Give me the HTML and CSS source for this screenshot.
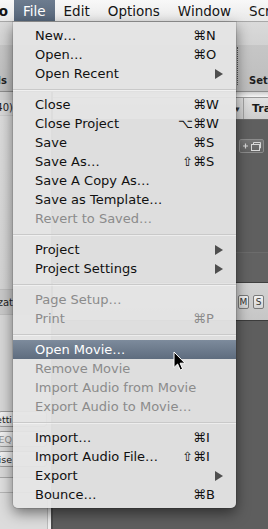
FILE: index.html
```html
<!DOCTYPE html>
<html>
<head>
<meta charset="utf-8">
<link rel="stylesheet" href="styles.css">
</head>
<body>
<div class="screen">
  <div class="menubar">
    <span class="mb-app"><span>Logic Pro</span></span>
    <span class="mb-item active">File</span>
    <span class="mb-item">Edit</span>
    <span class="mb-item">Options</span>
    <span class="mb-item">Window</span>
    <span class="mb-item">Screenset</span>
  </div>

  <div class="toolbar">
    <div class="tb-left"><span>Tools</span></div>
    <div class="tb-right"><span class="tb-dots"></span><span class="tb-label">Set Locators</span></div>
  </div>

  <div class="workspace">
    <div class="inspector">
      <div class="in-gap"></div>
      <div class="in-row"><span class="clip">(140)</span></div>
      <div class="in-plain"></div>
      <div class="in-band"><span class="clip">Visualizzat</span></div>
      <div class="in-plain2"></div>
      <div class="in-btn"><span class="clip">Setti</span></div>
      <div class="in-btn dim"><span class="clip">EQ</span></div>
      <div class="in-btn"><span class="clip">Noise</span></div>
      <div class="in-line"></div>
      <div class="in-box"></div>
      <div class="in-bottom"><span class="in-edge"></span></div>
    </div>

    <div class="arrange">
      <div class="ar-top"></div>
      <div class="ar-head"><span class="hd-tri">▾</span><span class="hd-div"></span><span class="hd-txt">Track</span></div>
      <div class="ar-dark">
        <div class="add-btn">
          <svg width="20" height="10" viewBox="0 0 20 10"><path d="M1 5h5M3.5 2.5v5" stroke="#d8d8d8" stroke-width="1.2" fill="none"/><rect x="9.5" y="3.5" width="8" height="6" fill="none" stroke="#d8d8d8"/><path d="M11.5 3.5V1.5h7v5.5h-1" fill="none" stroke="#d8d8d8"/></svg>
        </div>
      </div>
      <div class="ar-nums"><span>140</span><span>100</span></div>
      <div class="ar-strip"><span class="ms">M</span><span class="ms">S</span></div>
      <div class="ar-rest"></div>
    </div>
  </div>

  <div class="menu">
    <div class="mi"><span class="lb">New…</span><span class="md">⌘</span><span class="ky">N</span></div>
    <div class="mi"><span class="lb">Open…</span><span class="md">⌘</span><span class="ky">O</span></div>
    <div class="mi"><span class="lb">Open Recent</span><span class="md"></span><span class="sub"></span></div>
    <div class="sep"></div>
    <div class="mi"><span class="lb">Close</span><span class="md">⌘</span><span class="ky">W</span></div>
    <div class="mi"><span class="lb">Close Project</span><span class="md">⌥⌘</span><span class="ky">W</span></div>
    <div class="mi"><span class="lb">Save</span><span class="md">⌘</span><span class="ky">S</span></div>
    <div class="mi"><span class="lb">Save As…</span><span class="md">⇧⌘</span><span class="ky">S</span></div>
    <div class="mi"><span class="lb">Save A Copy As…</span></div>
    <div class="mi"><span class="lb">Save as Template…</span></div>
    <div class="mi off"><span class="lb">Revert to Saved…</span></div>
    <div class="sep"></div>
    <div class="mi"><span class="lb">Project</span><span class="md"></span><span class="sub"></span></div>
    <div class="mi"><span class="lb">Project Settings</span><span class="md"></span><span class="sub"></span></div>
    <div class="sep"></div>
    <div class="mi off"><span class="lb">Page Setup…</span></div>
    <div class="mi off"><span class="lb">Print</span><span class="md">⌘</span><span class="ky">P</span></div>
    <div class="sep"></div>
    <div class="mi hl"><span class="lb">Open Movie…</span></div>
    <div class="mi off"><span class="lb">Remove Movie</span></div>
    <div class="mi off"><span class="lb">Import Audio from Movie</span></div>
    <div class="mi off"><span class="lb">Export Audio to Movie…</span></div>
    <div class="sep"></div>
    <div class="mi"><span class="lb">Import…</span><span class="md">⌘</span><span class="ky">I</span></div>
    <div class="mi"><span class="lb">Import Audio File…</span><span class="md">⇧⌘</span><span class="ky">I</span></div>
    <div class="mi"><span class="lb">Export</span><span class="md"></span><span class="sub"></span></div>
    <div class="mi"><span class="lb">Bounce…</span><span class="md">⌘</span><span class="ky">B</span></div>
  </div>

  <svg class="cursor" width="14" height="21" viewBox="0 0 14 21">
    <path d="M1 1 L1 16.5 L4.6 13 L7.2 19 L9.6 18 L7.1 12.2 L12 12.2 Z" fill="#000" stroke="#fff" stroke-width="1" stroke-linejoin="round"/>
  </svg>
</div>
</body>
</html>
```

FILE: styles.css
```css
* { box-sizing: border-box; }
html, body { margin: 0; padding: 0; }
body {
  width: 268px;
  height: 529px;
  overflow: hidden;
  font-family: "DejaVu Sans", "Liberation Sans", sans-serif;
  background: #5c5c5c;
}
.screen {
  position: relative;
  width: 268px;
  height: 529px;
  overflow: hidden;
  display: flex;
  flex-direction: column;
}

/* menu bar */
.menubar {
  height: 22px;
  flex: none;
  display: flex;
  align-items: stretch;
  background: linear-gradient(#f8f8f8, #e9e9e9);
  border-bottom: 1px solid #a8a8a8;
  font-size: 13.5px;
  color: #151515;
  white-space: nowrap;
}
.mb-app {
  width: 14px;
  flex: none;
  display: flex;
  justify-content: flex-end;
  align-items: center;
  overflow: hidden;
  padding-right: 6px;
  font-weight: bold;
}
.mb-app span { flex: none; }
.mb-item {
  display: flex;
  align-items: center;
  padding: 0 9px;
  flex: none;
}
.mb-item.active {
  background: linear-gradient(#6d7c8f, #56667a);
  color: #fff;
}

/* toolbar */
.toolbar {
  height: 70px;
  flex: none;
  display: flex;
  justify-content: space-between;
  align-items: flex-end;
  background: linear-gradient(#dadada 0, #d2d2d2 33%, #c6c6c6 34%, #bdbdbd 100%);
  border-bottom: 1px solid #8c8c8c;
  font-size: 10px;
  font-weight: bold;
  color: #1e1e1e;
  padding-bottom: 5px;
}
.tb-left {
  width: 13px;
  display: flex;
  justify-content: flex-end;
  overflow: hidden;
  white-space: nowrap;
  padding-right: 6px;
}
.tb-left span { flex: none; }
.tb-right {
  width: 31px;
  display: flex;
  align-items: flex-end;
  white-space: nowrap;
  overflow: hidden;
}
.tb-dots {
  flex: none;
  width: 1px;
  height: 38px;
  border-left: 1px dotted #555;
  margin-bottom: 1px;
}
.tb-label { padding-left: 11px; flex: none; }

/* workspace */
.workspace {
  flex: 1;
  display: flex;
  min-height: 0;
}
.inspector {
  width: 53px;
  flex: none;
  display: flex;
  flex-direction: column;
  background: #d7d7d7;
  border-right: 2px solid #4a4a4a;
  font-size: 10px;
  color: #222;
}
.clip {
  width: 13px;
  display: flex;
  justify-content: flex-end;
  overflow: hidden;
  white-space: nowrap;
  flex: none;
}
.in-gap { height: 8px; background: #d0d0d0; }
.in-row { height: 16px; display: flex; align-items: center; border-bottom: 1px solid #cacaca; }
.in-plain { height: 173px; background: linear-gradient(#dadada, #d3d3d3); }
.in-band {
  height: 26px;
  display: flex;
  align-items: center;
  background: #c8c8c8;
  border-top: 1px solid #bdbdbd;
  border-bottom: 1px solid #bdbdbd;
}
.in-plain2 { height: 96px; background: #d6d6d6; }
.in-btn {
  height: 16px;
  margin: 0 4px 4px -2px;
  display: flex;
  align-items: center;
  border: 1px solid #9a9a9a;
  border-radius: 3px;
  background: linear-gradient(#f2f2f2, #dcdcdc);
  font-size: 9.5px;
  padding-left: 1px;
}
.in-btn .clip { width: 12px; }
.in-btn.dim { color: #8e8e8e; }
.in-line { height: 7px; border-bottom: 1px solid #a6a6a6; }
.in-box { height: 15px; border-bottom: 1px solid #b4b4b4; background: #dedede; }
.in-bottom {
  flex: 1;
  background: #dcdcdc;
  display: flex;
  justify-content: flex-end;
}
.in-edge { width: 4px; background: #efefef; border-left: 1px solid #bcbcbc; }

/* arrange */
.arrange {
  flex: 1;
  display: flex;
  flex-direction: column;
  background: #5d5d5d;
  padding-left: 181px;
  font-size: 10px;
}
.arrange > div { margin-left: -181px; padding-left: 181px; }
.ar-top { height: 6px; background: linear-gradient(#cfcfcf, #f6f6f6); border-bottom: 1px solid #9a9a9a; }
.ar-head {
  height: 22px;
  display: flex;
  align-items: center;
  background: linear-gradient(#e2e2e2, #cdcdcd);
  border-bottom: 1px solid #6a6a6a;
  color: #1a1a1a;
  font-weight: bold;
  font-size: 11px;
  white-space: nowrap;
  overflow: hidden;
}
.hd-tri { width: 9px; font-size: 9px; padding-left: 1px; flex: none; color: #333; }
.hd-div { width: 1px; height: 22px; background: #a2a2a2; margin-right: 8px; flex: none; }
.hd-txt { flex: none; }
.ar-dark {
  height: 133px;
  background: #5f5f5f;
  border-bottom: 1px solid #6c6c6c;
  padding-top: 19px;
}
.add-btn {
  margin-left: 5px;
  width: 25px;
  height: 14px;
  border: 1px solid #8c8c8c;
  border-radius: 2px;
  background: linear-gradient(#767676, #626262);
  display: flex;
  align-items: center;
  justify-content: center;
}
.ar-nums {
  height: 30px;
  display: flex;
  flex-direction: column;
  justify-content: center;
  align-items: flex-end;
  color: #e2e2e2;
  font-weight: bold;
  font-size: 10.5px;
  line-height: 13px;
  background: #626262;
  border-bottom: 1px solid #3f3f3f;
}
.ar-nums span { width: 14px; overflow: hidden; white-space: nowrap; }
.ar-strip {
  height: 38px;
  background: linear-gradient(#d2d2d2, #c6c6c6);
  border-bottom: 1px solid #3c3c3c;
  display: flex;
  align-items: center;
  gap: 4px;
}
.ar-strip .ms {
  width: 11px;
  height: 14px;
  border: 1px solid #7a7a7a;
  border-radius: 2px;
  background: linear-gradient(#f2f2f2, #d4d4d4);
  font-size: 9px;
  color: #333;
  display: flex;
  align-items: center;
  justify-content: center;
}
.ar-strip .ms:first-child { margin-left: 4px; }
.ar-rest { flex: 1; background: #5e5e5e; }

/* File menu */
.menu {
  position: absolute;
  left: 13px;
  top: 22px;
  width: 223px;
  padding: 4px 0;
  background: rgba(229, 229, 229, 0.95);
  border-radius: 0 0 5px 5px;
  box-shadow: 0 5px 14px rgba(0, 0, 0, 0.5), 0 0 0 1px rgba(0, 0, 0, 0.1);
  font-size: 13px;
  color: #111;
}
.mi {
  height: 19px;
  display: grid;
  grid-template-columns: 1fr auto 14px;
  align-items: center;
  padding: 0 16px 0 22px;
  white-space: nowrap;
}
.mi .md { text-align: right; }
.mi .ky { text-align: left; }
.mi.off { color: #8b8b8b; }
.mi.hl {
  background: linear-gradient(#7d8b9c, #5e6c7e);
  color: #fff;
}
.sub {
  grid-column: 3;
  justify-self: end;
  margin-right: -3px;
  width: 0;
  height: 0;
  border-left: 8px solid #4e4e4e;
  border-top: 5px solid transparent;
  border-bottom: 5px solid transparent;
}
.sep {
  height: 12px;
  display: flex;
  align-items: center;
}
.sep::before {
  content: "";
  flex: 1;
  height: 1px;
  background: #c9c9c9;
  box-shadow: 0 1px 0 rgba(255, 255, 255, 0.45);
}

.cursor {
  position: absolute;
  left: 173px;
  top: 351px;
}
```
